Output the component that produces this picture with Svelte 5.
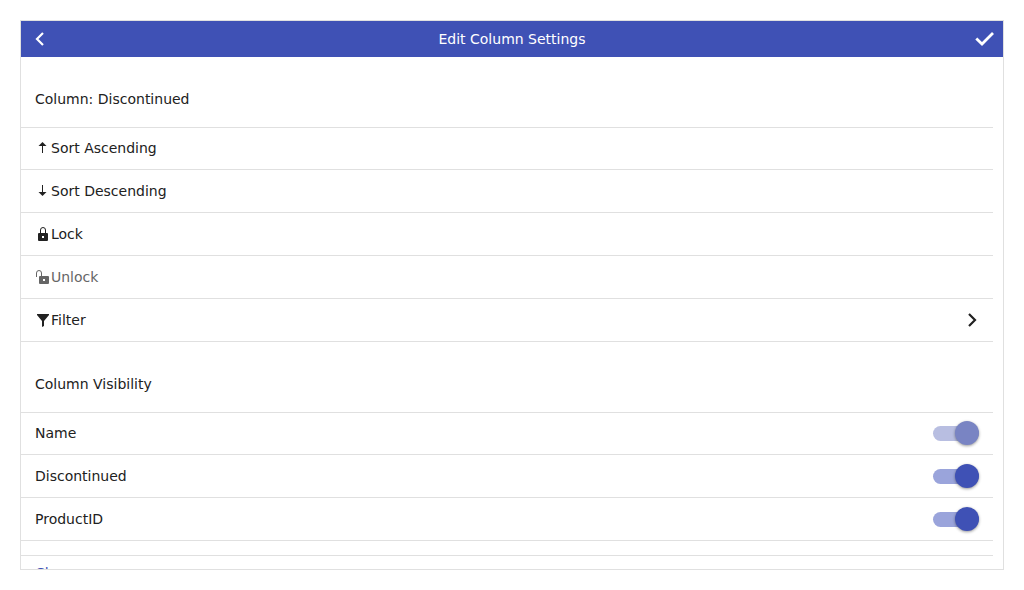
<script>
  let columns = $state([
    { name: 'Name', visible: true, locked: true },
    { name: 'Discontinued', visible: true, locked: false },
    { name: 'ProductID', visible: true, locked: false }
  ]);
  const actions = ['Sort Ascending', 'Sort Descending', 'Lock', 'Unlock', 'Filter'];
</script>

<section class="panel">
  <header>
    <button class="back" aria-label="Back">
      <svg viewBox="0 0 20 20" width="20" height="20"><path d="M14 4 8 10l6 6" fill="none" stroke="currentColor" stroke-width="2.200" /></svg>
    </button>
    <h1>Edit Column Settings</h1>
    <button class="done" aria-label="Done">
      <svg viewBox="0 0 20 20" width="20" height="20"><path d="M1.300 9.500 7 15 18 4" fill="none" stroke="currentColor" stroke-width="2.800" /></svg>
    </button>
  </header>
  <div class="content">
    <h2>Column: Discontinued</h2>
    <ul>
      {#each actions as action}
        <li>
          <button class="row" disabled={action === 'Unlock'}>
            <svg class="icon" viewBox="0 0 16 16" width="16" height="16" fill="currentColor">
              {#if action === 'Sort Ascending'}
                <path d="M7.500 2 11.500 6H8v7H7V6H3.500z" />
              {:else if action === 'Sort Descending'}
                <path d="M7.500 13 11.500 9H8V2H7v7H3.500z" />
              {:else if action === 'Lock'}
                <path fill-rule="evenodd" d="M3 8a1 1 0 0 1 1-1h8a1 1 0 0 1 1 1v6a1 1 0 0 1-1 1H4a1 1 0 0 1-1-1zM7 10v2h2v-2z" />
                <path d="M5.500 7V4a2.500 2.500 0 0 1 5 0v3" fill="none" stroke="currentColor" />
              {:else if action === 'Unlock'}
                <path fill-rule="evenodd" d="M4 8a1 1 0 0 1 1-1h8a1 1 0 0 1 1 1v6a1 1 0 0 1-1 1H5a1 1 0 0 1-1-1zM8 10v2h2v-2z" />
                <path d="M1.500 8V4a2.500 2.500 0 0 1 5 0v3" fill="none" stroke="currentColor" />
              {:else}
                <path d="M2 2h12v1L9 9v5l-2 1V9L2 3z" />
              {/if}
            </svg>
            <span>{action}</span>
            {#if action === 'Filter'}
              <svg class="more" viewBox="0 0 20 20" width="20" height="20"><path d="M8 4l6 6-6 6" fill="none" stroke="currentColor" stroke-width="2.200" /></svg>
            {/if}
          </button>
        </li>
      {/each}
    </ul>
    <h2>Column Visibility</h2>
    <ul>
      {#each columns as column}
        <li>
          <label class="row">
            <span>{column.name}</span>
            <input type="checkbox" role="switch" bind:checked={column.visible} disabled={column.locked} />
          </label>
        </li>
      {/each}
    </ul>
    <ul class="footer">
      <li><button class="row clear">Clear</button></li>
    </ul>
  </div>
</section>

<style>
  :global(body) { background: #fff; }
  * { box-sizing: border-box; }
  .panel {
    display: flex;
    flex-direction: column;
    height: calc(100vh - 40px);
    margin: 20px;
    border: 1px solid #e0e0e0;
    overflow: hidden;
    color: #212121;
    font: 14px/20px "DejaVu Sans", sans-serif;
  }
  header {
    display: flex;
    flex: none;
    align-items: center;
    justify-content: space-between;
    height: 36px;
    padding: 0 8px;
    background: #3f51b5;
    color: #fff;
  }
  header button { display: flex; padding: 0; border: 0; background: none; color: inherit; }
  h1, h2 { margin: 0; font-size: 14px; font-weight: 400; }
  .content { flex: 1; min-height: 0; overflow: hidden; padding-right: 10px; }
  h2 { padding: 32px 14px 18px; }
  ul { margin: 0; padding: 0; list-style: none; box-shadow: inset 0 1px #e0e0e0; }
  li { border-bottom: 1px solid #e0e0e0; }
  .row {
    display: flex;
    align-items: center;
    width: 100%;
    height: 42px;
    padding: 0 14px;
    border: 0;
    background: none;
    color: inherit;
    font: inherit;
    text-align: left;
  }
  .row:disabled { color: #666; }
  .icon { flex: none; }
  .more { margin-left: auto; margin-right: -2px; }
  input {
    display: flex;
    align-items: center;
    appearance: none;
    width: 46px;
    height: 15px;
    margin: 0 0 0 auto;
    border-radius: 8px;
    background: #bdbdbd;
  }
  input::before {
    content: "";
    width: 24px;
    height: 24px;
    border-radius: 50%;
    background: #fafafa;
    box-shadow: 0 1px 3px rgba(0, 0, 0, 0.4);
  }
  input:checked { justify-content: flex-end; background: #9aa4db; }
  input:checked::before { background: #3f51b5; }
  input:disabled { background: #b8bee1; }
  input:disabled::before { background: #7984c3; }
  .footer { margin-top: 14px; }
  .clear { height: 36px; color: #3f51b5; }
</style>
